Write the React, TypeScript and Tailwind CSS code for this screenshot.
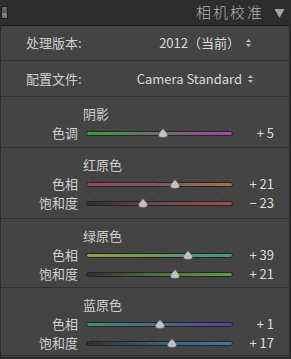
import React from 'react';

const FONT = { fontFamily: '"Noto Sans CJK SC", "Liberation Sans", sans-serif' };

interface ISliderRow {
  label: string;
  value: number;
  gradient: string;
}

interface ISection {
  title: string;
  height: string;
  rows: ISliderRow[];
}

const sections: ISection[] = [
  {
    title: '阴影',
    height: 'h-[51px]',
    rows: [{ label: '色调', value: 5, gradient: 'bg-[linear-gradient(90deg,#3f9a3f,#6e6e6e_50%,#a447a8)]' }],
  },
  {
    title: '红原色',
    height: 'h-[71px]',
    rows: [
      { label: '色相', value: 21, gradient: 'bg-[linear-gradient(90deg,#9e4270,#87585a_50%,#9c7448)]' },
      { label: '饱和度', value: -23, gradient: 'bg-[linear-gradient(90deg,#2e2e2e,#684848_45%,#a84c4c)]' },
    ],
  },
  {
    title: '绿原色',
    height: 'h-[69px]',
    rows: [
      { label: '色相', value: 39, gradient: 'bg-[linear-gradient(90deg,#8ea044,#6a9a5a_50%,#3f9594)]' },
      { label: '饱和度', value: 21, gradient: 'bg-[linear-gradient(90deg,#2e2e2e,#4f6f40_45%,#5f9e3f)]' },
    ],
  },
  {
    title: '蓝原色',
    height: 'h-[68px]',
    rows: [
      { label: '色相', value: 1, gradient: 'bg-[linear-gradient(90deg,#3f8f74,#4a6a80_50%,#5440a4)]' },
      { label: '饱和度', value: 17, gradient: 'bg-[linear-gradient(90deg,#2e2e2e,#3c5a70_45%,#3a7cb4)]' },
    ],
  },
];

function Thumb() {
  return (
    <svg width="11" height="10" viewBox="0 0 11 10">
      <path d="M5.5 0.5 C6.5 2.5 10 4.5 10 7 C10 8.8 8.2 9.5 5.5 9.5 C2.8 9.5 1 8.8 1 7 C1 4.5 4.5 2.5 5.5 0.5 Z" fill="#c2c2c2" stroke="#5e5e5e" strokeWidth="0.8" />
    </svg>
  );
}

function Slider({ label, value, gradient }: ISliderRow) {
  const pos = 50 + value / 2;
  return (
    <div className="flex h-[19px] items-center">
      <div className="w-[77px] text-right text-[13px] text-[#cfcfcf]">{label}</div>
      <div className="relative ml-[8px] h-[10px] w-[147px]">
        {/* tick marks */}
        <div className="absolute left-[2px] right-[2px] top-0 flex justify-between">
          {Array.from({ length: 11 }).map((_, i) => (
            <div key={i} className="h-[2px] w-px bg-[#525252]" />
          ))}
        </div>
        <div className={`absolute left-0 right-0 top-[3px] h-[5px] rounded-full border border-[#242424] ${gradient}`} />
        <div className="absolute top-[0px] -translate-x-1/2" style={{ left: `${pos}%` }}>
          <Thumb />
        </div>
      </div>
      <div className="flex-1 pr-[15px] text-right text-[13px] text-[#dedede]">
        {value < 0 ? '−' : '+'} {Math.abs(value)}
      </div>
    </div>
  );
}

function Updown() {
  return (
    <svg width="7" height="10" viewBox="0 0 7 10" className="ml-[5px]">
      <path d="M3.5 1 L6 4 L1 4 Z" fill="#bdbdbd" />
      <path d="M3.5 9 L6 6 L1 6 Z" fill="#bdbdbd" />
    </svg>
  );
}

export default function App() {
  return (
    <div className="h-[359px] w-[291px] overflow-hidden bg-[#2a2a2a]" style={FONT}>
      {/* header */}
      <div className="flex h-[25px] items-center bg-[#2d2d2d]">
        <div className="ml-[1px] h-[13px] w-[7px] border border-[#1a1a1a] bg-[linear-gradient(180deg,#6a6a6a,#555_50%,#8a8a8a_55%,#6c6c6c)]" />
        <div className="ml-auto text-[15px] font-light tracking-[2px] text-[#b0b0b0]">相机校准</div>
        <svg width="11" height="10" viewBox="0 0 11 10" className="ml-[10px] mr-[6px]">
          <path d="M0.5 1 L10.5 1 L5.5 10 Z" fill="#a4a4a4" />
        </svg>
      </div>

      <div className="ml-[1px] mr-[2px] h-[332px] border-t border-[#1c1c1c] bg-[#444444]">
        <div className="flex h-[35px] items-center border-b border-[#2f2f2f] pl-[25px] pr-[37px] text-[13px] text-[#cfcfcf]">
          <span>处理版本:</span>
          <span className="ml-auto text-[#dadada]">2012（当前）</span>
          <Updown />
        </div>
        <div className="flex h-[36px] items-center border-b border-[#2f2f2f] pl-[25px] pr-[35px] text-[13px] text-[#cfcfcf]">
          <span>配置文件:</span>
          <span className="ml-auto text-[#dadada]">Camera Standard</span>
          <Updown />
        </div>

        {sections.map((s) => (
          <div key={s.title} className={`${s.height} border-b border-[#2f2f2f] pt-[7px]`}>
            <div className="h-[19px] pl-[82px] text-[13px] leading-[19px] text-[#cfcfcf]">{s.title}</div>
            {s.rows.map((r) => (
              <Slider key={r.label} {...r} />
            ))}
          </div>
        ))}
      </div>
    </div>
  );
}
